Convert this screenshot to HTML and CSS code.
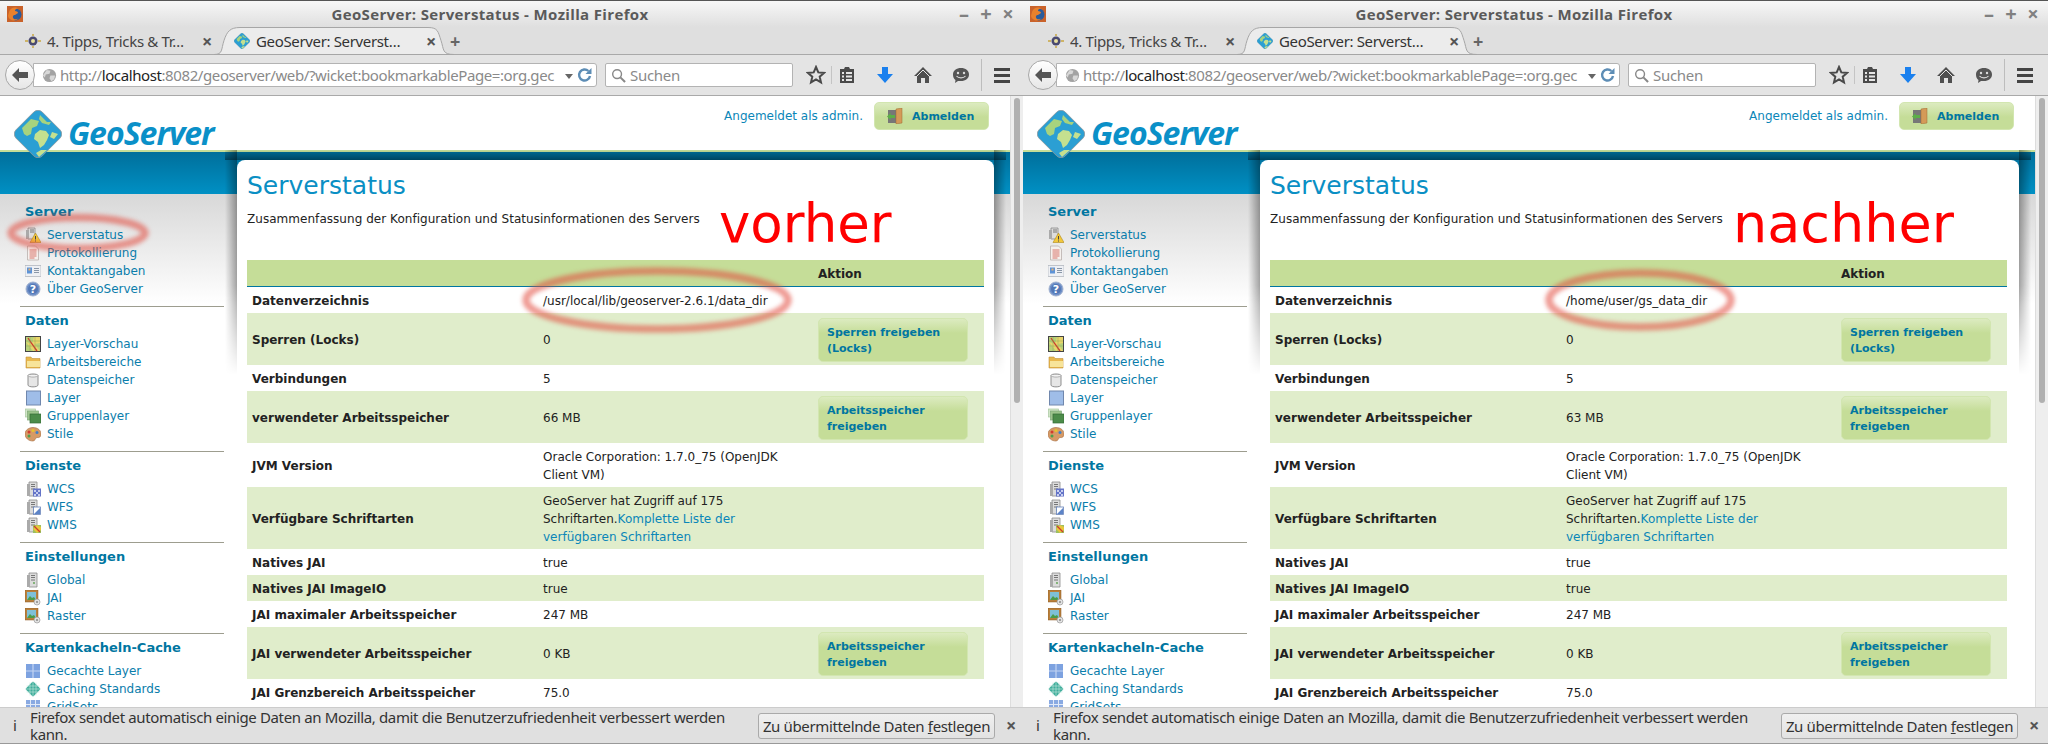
FILE: index.html
```html
<!DOCTYPE html>
<html lang="de">
<head>
    <meta charset="UTF-8">
    <title>GeoServer: Serverstatus - vorher / nachher</title>
    <link rel="stylesheet" href="styles.css">
</head>
<body>
    <!-- Icons -->
    <svg class="sprite" xmlns="http://www.w3.org/2000/svg">
        <symbol id="i-firefox" viewBox="0 0 16 16">
            <rect width="16" height="16" fill="#c9622a"/>
            <circle cx="8.5" cy="8.5" r="6" fill="#2a5c9c"/>
            <path d="M2 6c1-4 6-6 10-3-2-1-4 0-4 2 2 0 3 1 3 2l-3 2c-2 0-3 2-1 4 3 1 5-1 5-1-3 4-10 3-11-2z" fill="#e8812c"/>
        </symbol>
        <symbol id="i-globe" viewBox="0 0 48 48">
            <rect x="5.500" y="5.500" width="37" height="37" rx="6" transform="rotate(45 24 24)" fill="#2b9fd3" stroke="#8a9aa0" stroke-width=".8"/>
            <path d="M8 18l9-9 8 2-2 5-5 2-1 6-4 2-3-2zM26 5l7 7 4 0-2 3-7-2-3-4z" fill="#a7d37e"/>
            <path d="M21 24l5-4 6 1 3 4-2 5-3 5-4 3-2-6-4-3zM38 22l6 2-4 5-4-2zM22 43l5-3 6 0-8 7z" fill="#c5e08f"/>
        </symbol>
        <symbol id="i-tips" viewBox="0 0 16 16">
            <circle cx="8" cy="8" r="4.5" fill="#4a4a70"/>
            <circle cx="8" cy="8" r="2" fill="#e8e0a0"/>
            <path d="M0 8h3M13 8h3M8 1v2M8 13v2" stroke="#c9a640" stroke-width="1.5"/>
        </symbol>
        <symbol id="i-back" viewBox="0 0 18 18">
            <path d="M1 9l7-7v4h9v6H8v4z" fill="#555"/>
        </symbol>
        <symbol id="i-web" viewBox="0 0 16 16">
            <circle cx="8" cy="8" r="7" fill="#a3a3a3"/>
            <path d="M5 2l4 1-1 3-4 1-1 3-2-2zM9 8l5 0-1 4-3 2-2-3z" fill="#d8d8d8"/>
        </symbol>
        <symbol id="i-reload" viewBox="0 0 16 16">
            <path d="M13 9a5.5 5.5 0 1 1-1.6-5" fill="none" stroke="#5d8db5" stroke-width="2.4"/>
            <path d="M14.500 1v6h-6z" fill="#5d8db5"/>
        </symbol>
        <symbol id="i-search" viewBox="0 0 16 16">
            <circle cx="6.500" cy="6.500" r="4.700" fill="none" stroke="#888" stroke-width="1.500"/>
            <path d="M10 10l5 5" stroke="#888" stroke-width="2.200"/>
        </symbol>
        <symbol id="i-star" viewBox="0 0 20 20">
            <path d="M10 2l2.300 5.400 5.700.5-4.300 3.800 1.300 5.700-5-3-5 3 1.300-5.700L2 7.900l5.700-.5z" fill="none" stroke="#4a4a4a" stroke-width="2"/>
        </symbol>
        <symbol id="i-clip" viewBox="0 0 20 20">
            <path d="M3 4h4l1-2h4l1 2h4v14H3z" fill="#4a4a4a"/>
            <path d="M5 7h2v2H5zM9 7h6v2H9zM5 10.500h2v2H5zM9 10.500h6v2H9zM5 14h2v2H5zM9 14h6v2H9z" fill="#e6e6e6"/>
        </symbol>
        <symbol id="i-down" viewBox="0 0 20 20">
            <path d="M7 2h6v7h5l-8 9-8-9h5z" fill="#1a80ee"/>
        </symbol>
        <symbol id="i-home" viewBox="0 0 20 20">
            <path d="M10 2L1 11h3v7h4v-5h4v5h4v-7h3z" fill="#4f4f4f"/>
            <path d="M10 5l6 6" stroke="#e6e6e6"/>
            <path d="M10 5l-6 6" stroke="#e6e6e6"/>
        </symbol>
        <symbol id="i-chat" viewBox="0 0 20 20">
            <path d="M10 3c4.500 0 8 2.500 8 6.500S14.500 16 10 16H7l-3 2 .5-3C2.800 14 2 12 2 9.500 2 5.500 5.500 3 10 3z" fill="#555"/>
            <circle cx="7" cy="8" r="1.200" fill="#ddd"/>
            <circle cx="13" cy="8" r="1.200" fill="#ddd"/>
            <path d="M5.500 11c2 2.500 7 2.500 9 0" fill="none" stroke="#ddd" stroke-width="1.200"/>
        </symbol>
        <symbol id="i-server-warn" viewBox="0 0 16 16">
            <path d="M3 1h7v11H3z" fill="#ddd" stroke="#888" stroke-width=".8"/>
            <path d="M1 3h3v9H1z" fill="#aaa"/>
            <path d="M5 3h4M5 5h4" stroke="#777"/>
            <path d="M10.500 6L16 15.500H5z" fill="#f2c83c" stroke="#b08a1c" stroke-width=".6"/>
            <path d="M10.500 9v3.500M10.500 13.500v1" stroke="#444"/>
        </symbol>
        <symbol id="i-doc" viewBox="0 0 16 16">
            <path d="M2.500 1h8l3 3v11h-11z" fill="#f5f1ee" stroke="#b9b0ac" stroke-width=".8"/>
            <path d="M4.500 5h7M4.500 7h7M4.500 9h7M4.500 11h7M4.500 13h5" stroke="#d9756b"/>
        </symbol>
        <symbol id="i-card" viewBox="0 0 16 16">
            <rect y="2.500" width="16" height="11" fill="#eef0f4" stroke="#b3b8c0" stroke-width=".8"/>
            <rect x="2" y="4.500" width="5" height="6" fill="#5e93d6"/>
            <rect x="3.500" y="5.500" width="2" height="2" fill="#e4b070"/>
            <path d="M9 5.500h5M9 7.500h5M9 9.500h5" stroke="#8a97a8"/>
        </symbol>
        <symbol id="i-help" viewBox="0 0 16 16">
            <circle cx="8" cy="8" r="7" fill="#6f90c8" stroke="#a3b3d0"/>
            <circle cx="8" cy="8" r="5" fill="#5277b5"/>
            <text x="8" y="12" text-anchor="middle" class="icon-mark">?</text>
        </symbol>
        <symbol id="i-preview" viewBox="0 0 16 16">
            <rect x=".5" y=".5" width="15" height="15" fill="#b8d078" stroke="#444"/>
            <path d="M1 6l6 2 2-7h6v6l-5 1 5 7H8z" fill="#e8d56a"/>
            <path d="M3 2l4 6 5 7" fill="none" stroke="#d03a2c" stroke-width="1.300"/>
            <path d="M5 1v14M10 1v14M1 5h14M1 10h14" stroke="#7fa050" stroke-width=".4"/>
        </symbol>
        <symbol id="i-folder" viewBox="0 0 16 16">
            <path d="M1 3h5l1 1.500h8V14H1z" fill="#e9b84e" stroke="#c2923a" stroke-width=".6"/>
            <path d="M2 7h13v6H2z" fill="#f7e49a"/>
        </symbol>
        <symbol id="i-db" viewBox="0 0 16 16">
            <path d="M3 3.500C3 1.500 13 1.500 13 3.500V13C13 15.500 3 15.500 3 13z" fill="#e6e6e6" stroke="#8e8e8e"/>
            <path d="M3 3.500C3 5.500 13 5.500 13 3.500" fill="#fff" stroke="#8e8e8e" stroke-width=".7"/>
        </symbol>
        <symbol id="i-layer" viewBox="0 0 16 16">
            <rect x="1.500" y="1" width="14" height="14" fill="#9fbde8" stroke="#7087ad"/>
        </symbol>
        <symbol id="i-group" viewBox="0 0 16 16">
            <rect x=".5" y="1" width="10" height="8" fill="#d2e6c8" stroke="#a9c8a0" stroke-width=".7"/>
            <rect x="2.500" y="3" width="11" height="9" fill="#9dc48c" stroke="#7fa878" stroke-width=".7"/>
            <rect x="5" y="6" width="11" height="9" fill="#4c8c4a" stroke="#356a36" stroke-width=".7"/>
        </symbol>
        <symbol id="i-palette" viewBox="0 0 16 16">
            <path d="M8 1.500c5 0 8 3 8 6.500 0 3-2 4-4 3.500-2 0-1.500 3.500-4 3.500C3.500 15 0 12 0 8c0-4 4-6.500 8-6.500z" fill="#d69a66" stroke="#a36a3c" stroke-width=".6"/>
            <circle cx="4" cy="6" r="1.500" fill="#d23c2e"/>
            <circle cx="8" cy="4.500" r="1.500" fill="#e6c42c"/>
            <circle cx="12" cy="6.500" r="1.500" fill="#3d80c8"/>
            <circle cx="4" cy="10" r="1.500" fill="#4ca04a"/>
        </symbol>
        <symbol id="i-server" viewBox="0 0 16 16">
            <path d="M4 1h8v14H4z" fill="#dcdcdc" stroke="#8c8c8c" stroke-width=".8"/>
            <path d="M2 3h3v12H2z" fill="#aaa"/>
            <path d="M6 3.500h4M6 5.500h4M6 8h4" stroke="#777"/>
            <circle cx="9" cy="11" r=".9" fill="#5aa04c"/>
        </symbol>
        <symbol id="i-wcs" viewBox="0 0 16 16">
            <use href="#i-server"/>
            <rect x="8" y="7.500" width="8" height="8" fill="#6474c8"/>
            <path d="M9 9h2v2H9zM13 9h2v2h-2zM11 11h2v2h-2zM9 13h2v2H9zM13 13h2v2h-2z" fill="#c8d0f0"/>
        </symbol>
        <symbol id="i-wfs" viewBox="0 0 16 16">
            <use href="#i-server"/>
            <rect x="8.500" y="8" width="7" height="7.500" fill="#fff" stroke="#6480b8" stroke-width=".8"/>
            <path d="M9 15l6-6v6z" fill="#5c84c8"/>
        </symbol>
        <symbol id="i-wms" viewBox="0 0 16 16">
            <use href="#i-server"/>
            <rect x="8" y="8" width="8" height="8" fill="#9cc060"/>
            <path d="M8 12l4-4 4 2v3l-4 3z" fill="#e8c63c"/>
            <path d="M9 9l6 6" stroke="#d03a2c" stroke-width="1.200"/>
        </symbol>
        <symbol id="i-raster" viewBox="0 0 16 16">
            <rect width="13" height="12" fill="#b9803c" stroke="#8a5a24" stroke-width=".5"/>
            <rect x="2" y="2" width="9" height="8" fill="#7ec0d8"/>
            <path d="M2 10l3-4 2 2 2-1 2 3z" fill="#4c9c4a"/>
            <circle cx="12" cy="12" r="3" fill="#e2e2e2" stroke="#999" stroke-width=".7"/>
            <circle cx="12" cy="12" r="1" fill="#888"/>
        </symbol>
        <symbol id="i-cache" viewBox="0 0 16 16">
            <rect x="1" y="1" width="14" height="14" fill="#7da2e0"/>
            <path d="M8 1v14M1 8h14" stroke="#c3d4f2" stroke-width="1.200"/>
        </symbol>
        <symbol id="i-std" viewBox="0 0 16 16">
            <rect x="2.500" y="2.500" width="11" height="11" rx="1.500" transform="rotate(45 8 8)" fill="#3fae9c"/>
            <path d="M5 1.500v13M8 0v16M11 1.500v13M1.500 5h13M0 8h16M1.500 11h13" stroke="#c8e8de" stroke-width=".6"/>
        </symbol>
        <symbol id="i-grid" viewBox="0 0 16 16">
            <rect x="1" y="1" width="14" height="14" fill="#8aaae2"/>
            <path d="M5.500 1v14M10.500 1v14M1 5.500h14M1 10.500h14" stroke="#e2eaf8"/>
        </symbol>
        <symbol id="i-door" viewBox="0 0 16 16">
            <rect x="1" y="2" width="10" height="13" fill="#777"/>
            <path d="M9 1l6-1v15l-6 1z" fill="#d49a58" stroke="#9c6a30" stroke-width=".5"/>
            <path d="M0 8.500l3.500-3.500v2H8v3H3.500v2z" fill="#5cae48"/>
        </symbol>
    </svg>

    <!-- vorher -->
    <div class="window">
        <div class="titlebar">
            <svg class="app-icon"><use href="#i-firefox"/></svg>
            <span class="title">GeoServer: Serverstatus - Mozilla Firefox</span>
            <div class="win-controls"><span>–</span><span>+</span><span>×</span></div>
        </div>
        <div class="tabstrip">
            <div class="tab"><svg class="fav"><use href="#i-tips"/></svg><span class="tab-label">4. Tipps, Tricks &amp; Tr…</span><span class="tab-close">×</span></div>
            <div class="tab tab-active">
                <svg class="tab-shape" viewBox="0 0 240 28" preserveAspectRatio="none"><path d="M0 27.500c9 0 7-5 10-14S16 .5 26 .5h188c10 0 10 4 13 13s1 14 13 14z" fill="#ececec" stroke="#a6a6a6"/></svg>
                <svg class="fav"><use href="#i-globe"/></svg><span class="tab-label">GeoServer: Serverst…</span><span class="tab-close">×</span>
            </div>
            <span class="tab-new">+</span>
        </div>
        <div class="navbar">
            <div class="back"><svg><use href="#i-back"/></svg></div>
            <div class="urlbar">
                <svg class="web"><use href="#i-web"/></svg>
                <span class="url">http://<b>localhost</b>:8082/geoserver/web/?wicket:bookmarkablePage=:org.gec</span>
                <span class="url-drop"></span>
                <svg class="reload"><use href="#i-reload"/></svg>
            </div>
            <div class="searchbar"><svg class="search-icon"><use href="#i-search"/></svg><span>Suchen</span></div>
            <svg class="tool tool-star"><use href="#i-star"/></svg>
            <span class="tool-sep"></span>
            <svg class="tool tool-clip"><use href="#i-clip"/></svg>
            <svg class="tool"><use href="#i-down"/></svg>
            <svg class="tool"><use href="#i-home"/></svg>
            <svg class="tool"><use href="#i-chat"/></svg>
            <span class="tool-sep tool-sep-wide"></span>
            <div class="menu"><i></i><i></i><i></i></div>
        </div>
        <div class="viewport">
            <div class="page">
                <header class="page-header">
                    <div class="logo"><svg class="logo-mark"><use href="#i-globe"/></svg><span class="logo-text">GeoServer</span></div>
                    <div class="login"><span>Angemeldet als admin.</span><a class="btn-logout"><svg><use href="#i-door"/></svg>Abmelden</a></div>
                </header>
                <div class="band"></div>
                <div class="page-body">
                    <nav class="sidebar">
                        <section class="nav-section">
                            <h3>Server</h3>
                            <a><svg><use href="#i-server-warn"/></svg>Serverstatus</a>
                            <a><svg><use href="#i-doc"/></svg>Protokollierung</a>
                            <a><svg><use href="#i-card"/></svg>Kontaktangaben</a>
                            <a><svg><use href="#i-help"/></svg>Über GeoServer</a>
                        </section>
                        <section class="nav-section">
                            <h3>Daten</h3>
                            <a><svg><use href="#i-preview"/></svg>Layer-Vorschau</a>
                            <a><svg><use href="#i-folder"/></svg>Arbeitsbereiche</a>
                            <a><svg><use href="#i-db"/></svg>Datenspeicher</a>
                            <a><svg><use href="#i-layer"/></svg>Layer</a>
                            <a><svg><use href="#i-group"/></svg>Gruppenlayer</a>
                            <a><svg><use href="#i-palette"/></svg>Stile</a>
                        </section>
                        <section class="nav-section">
                            <h3>Dienste</h3>
                            <a><svg><use href="#i-wcs"/></svg>WCS</a>
                            <a><svg><use href="#i-wfs"/></svg>WFS</a>
                            <a><svg><use href="#i-wms"/></svg>WMS</a>
                        </section>
                        <section class="nav-section">
                            <h3>Einstellungen</h3>
                            <a><svg><use href="#i-server"/></svg>Global</a>
                            <a><svg><use href="#i-raster"/></svg>JAI</a>
                            <a><svg><use href="#i-raster"/></svg>Raster</a>
                        </section>
                        <section class="nav-section">
                            <h3>Kartenkacheln-Cache</h3>
                            <a><svg><use href="#i-cache"/></svg>Gecachte Layer</a>
                            <a><svg><use href="#i-std"/></svg>Caching Standards</a>
                            <a><svg><use href="#i-grid"/></svg>GridSets</a>
                        </section>
                    </nav>
                    <main class="content">
                        <div class="card">
                            <h1>Serverstatus</h1>
                            <p class="intro">Zusammenfassung der Konfiguration und Statusinformationen des Servers</p>
                            <span class="stamp">vorher</span>
                            <table class="status">
                                <thead><tr><th></th><th></th><th>Aktion</th></tr></thead>
                                <tbody>
                                    <tr><th>Datenverzeichnis</th><td>/usr/local/lib/geoserver-2.6.1/data_dir</td><td></td></tr>
                                    <tr><th>Sperren (Locks)</th><td>0</td><td><a class="btn">Sperren freigeben (Locks)</a></td></tr>
                                    <tr><th>Verbindungen</th><td>5</td><td></td></tr>
                                    <tr><th>verwendeter Arbeitsspeicher</th><td>66 MB</td><td><a class="btn">Arbeitsspeicher freigeben</a></td></tr>
                                    <tr><th>JVM Version</th><td>Oracle Corporation: 1.7.0_75 (OpenJDK Client VM)</td><td></td></tr>
                                    <tr><th>Verfügbare Schriftarten</th><td>GeoServer hat Zugriff auf 175 Schriftarten.<a>Komplette Liste der verfügbaren Schriftarten</a></td><td></td></tr>
                                    <tr><th>Natives JAI</th><td>true</td><td></td></tr>
                                    <tr><th>Natives JAI ImageIO</th><td>true</td><td></td></tr>
                                    <tr><th>JAI maximaler Arbeitsspeicher</th><td>247 MB</td><td></td></tr>
                                    <tr><th>JAI verwendeter Arbeitsspeicher</th><td>0 KB</td><td><a class="btn">Arbeitsspeicher freigeben</a></td></tr>
                                    <tr><th>JAI Grenzbereich Arbeitsspeicher</th><td>75.0</td><td></td></tr>
                                </tbody>
                            </table>
                        </div>
                    </main>
                </div>
            </div>
            <div class="scrollbar"><div class="thumb"></div></div>
        </div>
        <div class="notice">
            <span class="notice-i">i</span>
            <p>Firefox sendet automatisch einige Daten an Mozilla, damit die Benutzerzufriedenheit verbessert werden kann.</p>
            <button class="notice-btn">Zu übermittelnde Daten <u>f</u>estlegen</button>
            <span class="notice-close">×</span>
        </div>
        <svg class="marks" viewBox="0 0 1023 744">
            <ellipse class="mark" cx="78" cy="233" rx="67" ry="15.500"/>
            <ellipse class="mark" cx="657" cy="300" rx="131" ry="29"/>
        </svg>
    </div>

    <!-- nachher -->
    <div class="window window-last">
        <div class="titlebar">
            <svg class="app-icon"><use href="#i-firefox"/></svg>
            <span class="title">GeoServer: Serverstatus - Mozilla Firefox</span>
            <div class="win-controls"><span>–</span><span>+</span><span>×</span></div>
        </div>
        <div class="tabstrip">
            <div class="tab"><svg class="fav"><use href="#i-tips"/></svg><span class="tab-label">4. Tipps, Tricks &amp; Tr…</span><span class="tab-close">×</span></div>
            <div class="tab tab-active">
                <svg class="tab-shape" viewBox="0 0 240 28" preserveAspectRatio="none"><path d="M0 27.500c9 0 7-5 10-14S16 .5 26 .5h188c10 0 10 4 13 13s1 14 13 14z" fill="#ececec" stroke="#a6a6a6"/></svg>
                <svg class="fav"><use href="#i-globe"/></svg><span class="tab-label">GeoServer: Serverst…</span><span class="tab-close">×</span>
            </div>
            <span class="tab-new">+</span>
        </div>
        <div class="navbar">
            <div class="back"><svg><use href="#i-back"/></svg></div>
            <div class="urlbar">
                <svg class="web"><use href="#i-web"/></svg>
                <span class="url">http://<b>localhost</b>:8082/geoserver/web/?wicket:bookmarkablePage=:org.gec</span>
                <span class="url-drop"></span>
                <svg class="reload"><use href="#i-reload"/></svg>
            </div>
            <div class="searchbar"><svg class="search-icon"><use href="#i-search"/></svg><span>Suchen</span></div>
            <svg class="tool tool-star"><use href="#i-star"/></svg>
            <span class="tool-sep"></span>
            <svg class="tool tool-clip"><use href="#i-clip"/></svg>
            <svg class="tool"><use href="#i-down"/></svg>
            <svg class="tool"><use href="#i-home"/></svg>
            <svg class="tool"><use href="#i-chat"/></svg>
            <span class="tool-sep tool-sep-wide"></span>
            <div class="menu"><i></i><i></i><i></i></div>
        </div>
        <div class="viewport">
            <div class="page">
                <header class="page-header">
                    <div class="logo"><svg class="logo-mark"><use href="#i-globe"/></svg><span class="logo-text">GeoServer</span></div>
                    <div class="login"><span>Angemeldet als admin.</span><a class="btn-logout"><svg><use href="#i-door"/></svg>Abmelden</a></div>
                </header>
                <div class="band"></div>
                <div class="page-body">
                    <nav class="sidebar">
                        <section class="nav-section">
                            <h3>Server</h3>
                            <a><svg><use href="#i-server-warn"/></svg>Serverstatus</a>
                            <a><svg><use href="#i-doc"/></svg>Protokollierung</a>
                            <a><svg><use href="#i-card"/></svg>Kontaktangaben</a>
                            <a><svg><use href="#i-help"/></svg>Über GeoServer</a>
                        </section>
                        <section class="nav-section">
                            <h3>Daten</h3>
                            <a><svg><use href="#i-preview"/></svg>Layer-Vorschau</a>
                            <a><svg><use href="#i-folder"/></svg>Arbeitsbereiche</a>
                            <a><svg><use href="#i-db"/></svg>Datenspeicher</a>
                            <a><svg><use href="#i-layer"/></svg>Layer</a>
                            <a><svg><use href="#i-group"/></svg>Gruppenlayer</a>
                            <a><svg><use href="#i-palette"/></svg>Stile</a>
                        </section>
                        <section class="nav-section">
                            <h3>Dienste</h3>
                            <a><svg><use href="#i-wcs"/></svg>WCS</a>
                            <a><svg><use href="#i-wfs"/></svg>WFS</a>
                            <a><svg><use href="#i-wms"/></svg>WMS</a>
                        </section>
                        <section class="nav-section">
                            <h3>Einstellungen</h3>
                            <a><svg><use href="#i-server"/></svg>Global</a>
                            <a><svg><use href="#i-raster"/></svg>JAI</a>
                            <a><svg><use href="#i-raster"/></svg>Raster</a>
                        </section>
                        <section class="nav-section">
                            <h3>Kartenkacheln-Cache</h3>
                            <a><svg><use href="#i-cache"/></svg>Gecachte Layer</a>
                            <a><svg><use href="#i-std"/></svg>Caching Standards</a>
                            <a><svg><use href="#i-grid"/></svg>GridSets</a>
                        </section>
                    </nav>
                    <main class="content">
                        <div class="card">
                            <h1>Serverstatus</h1>
                            <p class="intro">Zusammenfassung der Konfiguration und Statusinformationen des Servers</p>
                            <span class="stamp stamp-after">nachher</span>
                            <table class="status">
                                <thead><tr><th></th><th></th><th>Aktion</th></tr></thead>
                                <tbody>
                                    <tr><th>Datenverzeichnis</th><td>/home/user/gs_data_dir</td><td></td></tr>
                                    <tr><th>Sperren (Locks)</th><td>0</td><td><a class="btn">Sperren freigeben (Locks)</a></td></tr>
                                    <tr><th>Verbindungen</th><td>5</td><td></td></tr>
                                    <tr><th>verwendeter Arbeitsspeicher</th><td>63 MB</td><td><a class="btn">Arbeitsspeicher freigeben</a></td></tr>
                                    <tr><th>JVM Version</th><td>Oracle Corporation: 1.7.0_75 (OpenJDK Client VM)</td><td></td></tr>
                                    <tr><th>Verfügbare Schriftarten</th><td>GeoServer hat Zugriff auf 175 Schriftarten.<a>Komplette Liste der verfügbaren Schriftarten</a></td><td></td></tr>
                                    <tr><th>Natives JAI</th><td>true</td><td></td></tr>
                                    <tr><th>Natives JAI ImageIO</th><td>true</td><td></td></tr>
                                    <tr><th>JAI maximaler Arbeitsspeicher</th><td>247 MB</td><td></td></tr>
                                    <tr><th>JAI verwendeter Arbeitsspeicher</th><td>0 KB</td><td><a class="btn">Arbeitsspeicher freigeben</a></td></tr>
                                    <tr><th>JAI Grenzbereich Arbeitsspeicher</th><td>75.0</td><td></td></tr>
                                </tbody>
                            </table>
                        </div>
                    </main>
                </div>
            </div>
            <div class="scrollbar"><div class="thumb"></div></div>
        </div>
        <div class="notice">
            <span class="notice-i">i</span>
            <p>Firefox sendet automatisch einige Daten an Mozilla, damit die Benutzerzufriedenheit verbessert werden kann.</p>
            <button class="notice-btn">Zu übermittelnde Daten <u>f</u>estlegen</button>
            <span class="notice-close">×</span>
        </div>
        <svg class="marks" viewBox="0 0 1023 744">
            <ellipse class="mark" cx="617" cy="300" rx="91" ry="27"/>
        </svg>
    </div>
</body>
</html>
```
FILE: styles.css
```css
/* Reset */
body, h1, h3, p {
    margin: 0;
    padding: 0;
}

body {
    display: flex;
    width: 2048px;
    height: 744px;
    overflow: hidden;
    background-color: #fff;
    font-family: "DejaVu Sans", sans-serif;
    font-size: 12px;
    color: #222;
}

.sprite {
    display: none;
}

.icon-mark {
    font-family: "DejaVu Sans", sans-serif;
    font-size: 11px;
    font-weight: bold;
    fill: #fff;
}

/* Browser window */
.window {
    position: relative;
    display: flex;
    flex-direction: column;
    flex: 0 0 1023px;
    height: 744px;
    overflow: hidden;
}

.window-last {
    flex: 1;
}

.titlebar {
    display: flex;
    align-items: center;
    position: relative;
    height: 27px;
    padding-left: 7px;
    border-top: 1px solid #555;
    box-sizing: border-box;
    background: linear-gradient(#f7f7f7, #dfdfdf);
    font-family: "Open Sans", sans-serif;
}

.app-icon {
    flex: none;
    width: 16px;
    height: 16px;
}

.title {
    flex: 1;
    text-align: center;
    font-size: 15px;
    font-weight: bold;
    letter-spacing: .35px;
    color: #5a5a5a;
}

.win-controls {
    display: flex;
    flex: none;
    gap: 8px;
    width: 66px;
    font-size: 20px;
    font-weight: bold;
    line-height: 26px;
    color: #808080;
}

.win-controls span {
    width: 14px;
    text-align: center;
}

.tabstrip {
    display: flex;
    align-items: center;
    height: 28px;
    padding-left: 22px;
    border-bottom: 1px solid #a9a9a9;
    box-sizing: border-box;
    background-color: #dfdfdf;
    font-family: "Noto Sans", sans-serif;
    font-size: 15px;
    letter-spacing: -.35px;
    color: #444;
}

.tab {
    position: relative;
    display: flex;
    align-items: center;
    width: 200px;
    padding-left: 3px;
    box-sizing: border-box;
}

.tab-active {
    width: 216px;
    height: 27px;
    margin-left: 4px;
    padding-left: 8px;
    color: #333;
}

.tab-shape {
    position: absolute;
    top: 0;
    left: -12px;
    width: 240px;
    height: 28px;
}

.fav {
    position: relative;
    flex: none;
    width: 16px;
    height: 16px;
    margin-right: 6px;
}

.tab-label {
    position: relative;
    flex: 1;
    white-space: nowrap;
    overflow: hidden;
}

.tab-close {
    position: relative;
    width: 20px;
    font-size: 18px;
    font-weight: bold;
    color: #555;
}

.tab-active .tab-close {
    width: 16px;
}

.tab-new {
    margin-left: 8px;
    font-size: 18px;
    font-weight: bold;
    color: #666;
}

.navbar {
    display: flex;
    align-items: center;
    height: 41px;
    padding-left: 5px;
    border-bottom: 1px solid #a9a9a9;
    box-sizing: border-box;
    background-color: #e4e4e4;
    font-family: "Noto Sans", sans-serif;
    font-size: 15px;
    letter-spacing: -.3px;
}

.back {
    position: relative;
    z-index: 1;
    display: flex;
    align-items: center;
    justify-content: center;
    flex: none;
    width: 30px;
    height: 30px;
    box-sizing: border-box;
    border: 1px solid #a8a8a8;
    border-radius: 50%;
    background: linear-gradient(#fff, #e6e6e6);
}

.back svg {
    width: 18px;
    height: 18px;
}

.urlbar {
    display: flex;
    align-items: center;
    flex: none;
    width: 564px;
    height: 24px;
    margin-left: -2px;
    padding-left: 8px;
    box-sizing: border-box;
    border: 1px solid #b3b3b3;
    border-radius: 0 3px 3px 0;
    background-color: #fff;
    color: #8a8a8a;
}

.web {
    flex: none;
    width: 15px;
    height: 15px;
    margin-right: 3px;
}

.url {
    flex: 1;
    overflow: hidden;
    white-space: nowrap;
    letter-spacing: -.4px;
}

.url b {
    font-weight: normal;
    color: #222;
}

.url-drop {
    flex: none;
    width: 0;
    height: 0;
    margin: 2px 4px 0 10px;
    border-left: 4px solid transparent;
    border-right: 4px solid transparent;
    border-top: 5px solid #666;
}

.reload {
    flex: none;
    width: 16px;
    height: 16px;
    margin-right: 3px;
}

.searchbar {
    display: flex;
    align-items: center;
    flex: none;
    width: 188px;
    height: 24px;
    margin-left: 8px;
    padding-left: 5px;
    box-sizing: border-box;
    border: 1px solid #b3b3b3;
    border-radius: 2px;
    background-color: #fff;
    color: #8a8a8a;
}

.search-icon {
    width: 15px;
    height: 15px;
    margin-right: 4px;
}

.tool {
    flex: none;
    width: 20px;
    height: 20px;
    margin-left: 18px;
}

.tool-star {
    margin-left: 13px;
}

.tool-clip {
    margin-left: 5px;
}

.tool-sep {
    flex: none;
    width: 1px;
    height: 18px;
    margin-left: 5px;
    background-color: #c4c4c4;
}

.tool-sep-wide {
    height: 32px;
    margin-left: 10px;
    background-color: #bdbdbd;
}

.menu {
    display: flex;
    flex-direction: column;
    gap: 3px;
    margin-left: 12px;
}

.menu i {
    display: block;
    width: 16px;
    height: 3px;
    background-color: #444;
}

/* Web page */
.viewport {
    display: flex;
    flex: 1;
    min-height: 0;
}

.page {
    flex: 1;
    min-width: 0;
    overflow: hidden;
    background-color: #fff;
}

.page-header {
    display: flex;
    justify-content: space-between;
    height: 54px;
    padding-right: 21px;
}

.logo {
    position: relative;
    z-index: 1;
    display: flex;
    align-items: center;
    height: 48px;
    margin: 14px 0 0 14px;
}

.logo-mark {
    width: 48px;
    height: 48px;
    margin-right: 6px;
}

.logo-text {
    margin-top: -3px;
    font-family: "Open Sans", sans-serif;
    font-size: 32px;
    font-weight: bold;
    font-style: italic;
    letter-spacing: -1px;
    color: #0a90c8;
}

.login {
    display: flex;
    align-items: center;
    gap: 11px;
    height: 28px;
    margin-top: 6px;
    color: #0a86b8;
}

.btn-logout {
    display: flex;
    align-items: center;
    width: 115px;
    height: 28px;
    padding-left: 12px;
    box-sizing: border-box;
    border: 1px solid #d2e6b0;
    border-radius: 5px;
    background: linear-gradient(#dcebc0, #c5dd98 14px);
    font-size: 11px;
    font-weight: bold;
    color: #0076a1;
}

.btn-logout svg {
    width: 16px;
    height: 16px;
    margin-right: 9px;
}

.band {
    height: 42px;
    border-top: 2px solid #c5dd98;
    box-sizing: content-box;
    background: linear-gradient(#006f9b, #0090c4);
}

.page-body {
    display: flex;
    align-items: flex-start;
    background: linear-gradient(#d8d8d8, #fff 110px) no-repeat;
}

.sidebar {
    flex: none;
    width: 204px;
    padding: 4px 13px 0 20px;
}

.nav-section {
    padding: 5px 0 8px 5px;
    border-bottom: 1px solid #9d9d8f;
}

.nav-section h3 {
    margin-bottom: 5px;
    font-size: 13px;
    line-height: 18px;
    color: #0076a1;
}

.nav-section a {
    display: flex;
    align-items: center;
    height: 18px;
    line-height: 18px;
    color: #0a7dab;
}

.nav-section svg {
    flex: none;
    width: 16px;
    height: 16px;
    margin-right: 6px;
}

.content {
    position: relative;
    flex: 1;
    min-width: 0;
    margin: -34px 16px 0 0;
}

/* shadow round the card, fades out lower down the page */
.content::before {
    content: "";
    position: absolute;
    top: -10px;
    left: -12px;
    right: -12px;
    height: 225px;
    background:
        linear-gradient(to right, rgba(0, 0, 0, 0), rgba(0, 0, 0, .35)) left top / 12px 100% no-repeat,
        linear-gradient(to left, rgba(0, 0, 0, 0), rgba(0, 0, 0, .35)) right top / 12px 100% no-repeat,
        linear-gradient(rgba(0, 0, 0, 0), rgba(0, 0, 0, .4)) left top / 100% 10px no-repeat;
    -webkit-mask-image: linear-gradient(#000 60%, transparent);
    mask-image: linear-gradient(#000 60%, transparent);
}

.card {
    position: relative;
    padding: 11px 10px 0;
    border-radius: 8px 8px 0 0;
    background-color: #fff;
}

.card h1 {
    font-size: 25px;
    font-weight: normal;
    line-height: 30px;
    color: #0a8fc4;
}

.intro {
    margin: 9px 0 32px 0;
    line-height: 18px;
    letter-spacing: .04px;
}

.stamp {
    position: absolute;
    top: 32px;
    left: 482px;
    font-size: 53px;
    line-height: 64px;
    color: #f00;
}

.stamp-after {
    left: 473px;
    font-size: 54px;
}

.status {
    width: 737px;
    table-layout: fixed;
    border-collapse: collapse;
    line-height: 18px;
}

.status th,
.status td {
    padding: 5px 5px 3px;
    text-align: left;
    vertical-align: middle;
}

.status th:first-child {
    width: 281px;
}

.status th:nth-child(2) {
    width: 265px;
}

.status thead tr {
    background-color: #c5dd98;
    border-bottom: 1px solid #0076a1;
}

.status tbody tr:nth-child(even) {
    background-color: #e0edcb;
}

.status td a {
    color: #0a86b8;
}

.status td a.btn,
.btn {
    display: block;
    width: 150px;
    height: 44px;
    padding: 6px 8px;
    box-sizing: border-box;
    border: 1px solid #d2e6b0;
    border-radius: 5px;
    background: linear-gradient(#dcebc0, #c5dd98 14px);
    font-size: 11px;
    font-weight: bold;
    line-height: 16px;
    color: #0076a1;
}

.scrollbar {
    flex: none;
    width: 13px;
    padding: 2px 3px 0;
    box-sizing: border-box;
    background-color: #eee;
    border-left: 1px solid #ddd;
}

.thumb {
    height: 305px;
    border-radius: 4px;
    background-color: #b0b0b0;
}

/* Notification bar */
.notice {
    display: flex;
    align-items: center;
    flex: none;
    height: 37px;
    padding-left: 13px;
    box-sizing: border-box;
    border-top: 1px solid #ccc;
    border-bottom: 1px solid #999;
    background-color: #e0e0e0;
    font-family: "Noto Sans", sans-serif;
    font-size: 15px;
    line-height: 17px;
    letter-spacing: -.36px;
    color: #333;
}

.notice-i {
    flex: none;
    width: 17px;
}

.notice p {
    flex: none;
    width: 720px;
}

.notice-btn {
    flex: none;
    width: 237px;
    height: 26px;
    margin-left: 8px;
    padding: 0;
    border: 1px solid #aaa;
    border-radius: 3px;
    background: linear-gradient(#f0f0f0, #e2e2e2);
    font-family: "Noto Sans", sans-serif;
    font-size: 15px;
    letter-spacing: -.36px;
    white-space: nowrap;
    color: #333;
}

.notice-close {
    margin-left: 11px;
    font-size: 18px;
    font-weight: bold;
    color: #555;
}

/* Hand-drawn red circles */
.marks {
    position: absolute;
    top: 0;
    left: 0;
    width: 1023px;
    height: 744px;
    pointer-events: none;
}

.mark {
    fill: none;
    stroke: #e2483c;
    stroke-opacity: .55;
    stroke-width: 7.5;
    filter: blur(2px);
}
```
